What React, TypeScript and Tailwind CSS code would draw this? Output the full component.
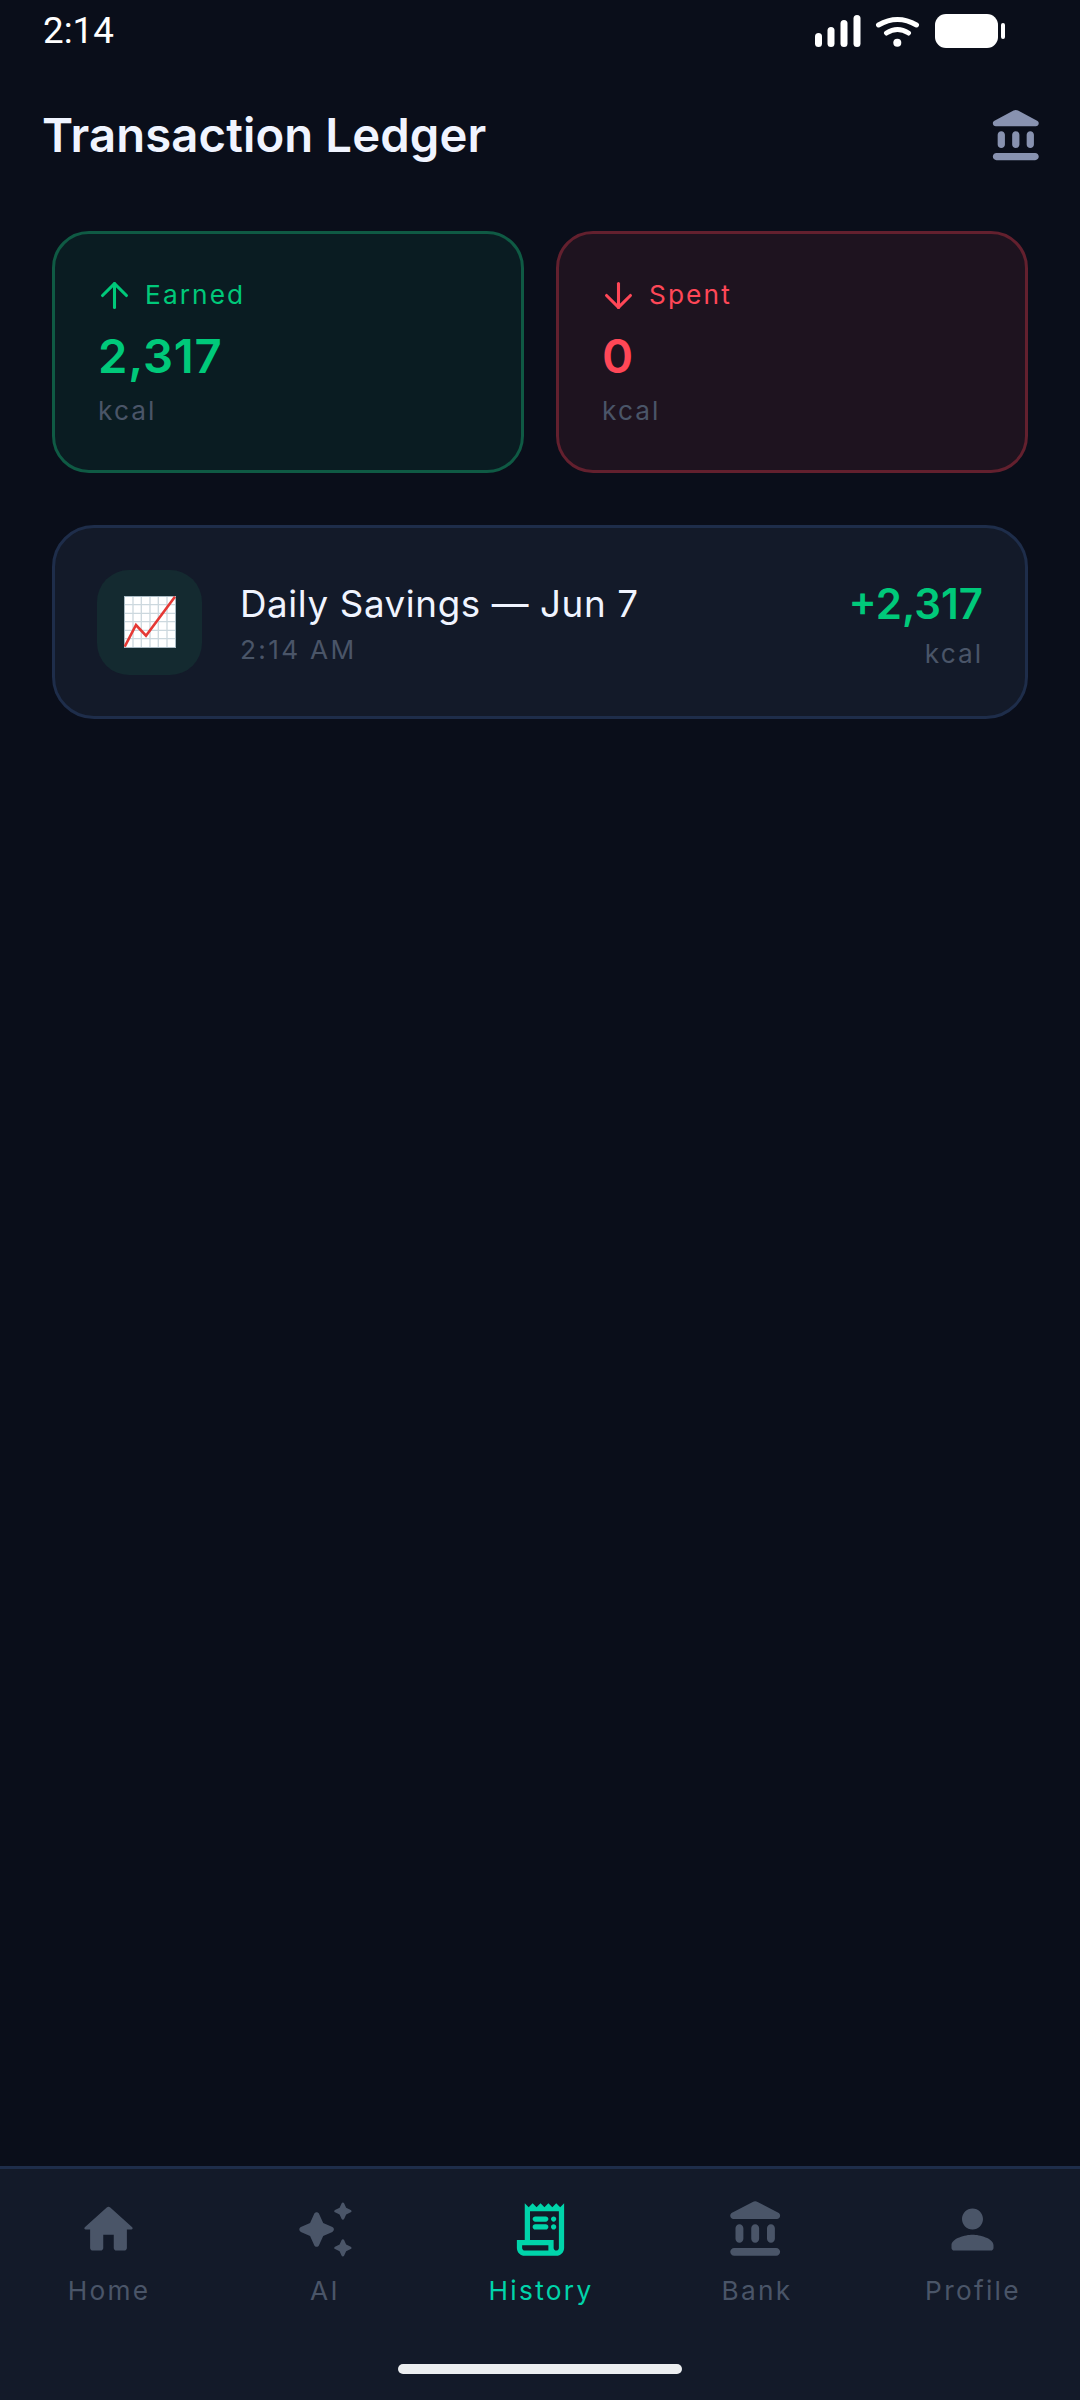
import { ArrowDown, ArrowUp } from "lucide-react"

const font = { fontFamily: "Inter, sans-serif" }

const paths = {
  home: "M10 19v-5h4v5c0 .55.45 1 1 1h3c.55 0 1-.45 1-1v-7h1.7c.46 0 .68-.57.33-.87L12.67 3.6c-.38-.34-.96-.34-1.34 0l-8.36 7.53c-.34.3-.13.87.33.87H5v7c0 .55.45 1 1 1h3c.55 0 1-.45 1-1z",
  ai: "M19.46 8l.79-1.75L22 5.46c.39-.18.39-.73 0-.91l-1.75-.79L19.46 2c-.18-.39-.73-.39-.91 0l-.79 1.75-1.76.79c-.39.18-.39.73 0 .91l1.75.79.79 1.76c.18.39.74.39.92 0zM11.5 9.5 9.91 6c-.35-.78-1.47-.78-1.82 0L6.5 9.5 3 11.09c-.78.36-.78 1.47 0 1.82l3.5 1.59L8.09 18c.36.78 1.47.78 1.82 0l1.59-3.5 3.5-1.59c.78-.36.78-1.47 0-1.82L11.5 9.5zm7.04 6.5-.79 1.75-1.75.79c-.39.18-.39.73 0 .91l1.75.79.79 1.76c.18.39.73.39.91 0l.79-1.75 1.76-.79c.39-.18.39-.73 0-.91l-1.75-.79-.79-1.76c-.18-.39-.74-.39-.92 0z",
  receipt:
    "M19.5 3.5 18 2l-1.5 1.5L15 2l-1.5 1.5L12 2l-1.5 1.5L9 2 7.5 3.5 6 2v14H3v3c0 1.66 1.34 3 3 3h12c1.66 0 3-1.34 3-3V2l-1.5 1.5zM15 20H6c-.55 0-1-.45-1-1v-1h10v2zm4-1c0 .55-.45 1-1 1s-1-.45-1-1v-3H8V5h11v14zM10 7h4c.55 0 1 .45 1 1s-.45 1-1 1h-4c-.55 0-1-.45-1-1s.45-1 1-1zm7 2c.55 0 1-.45 1-1s-.45-1-1-1-1 .45-1 1 .45 1 1 1zm-7 1h4c.55 0 1 .45 1 1s-.45 1-1 1h-4c-.55 0-1-.45-1-1s.45-1 1-1zm7 2c.55 0 1-.45 1-1s-.45-1-1-1-1 .45-1 1 .45 1 1 1z",
  bank: "M4 11.5v4c0 .83.67 1.5 1.5 1.5S7 16.33 7 15.5v-4c0-.83-.67-1.5-1.5-1.5S4 10.67 4 11.5zm6 0v4c0 .83.67 1.5 1.5 1.5s1.5-.67 1.5-1.5v-4c0-.83-.67-1.5-1.5-1.5s-1.5.67-1.5 1.5zM3.5 22h16c.83 0 1.5-.67 1.5-1.5s-.67-1.5-1.5-1.5h-16c-.83 0-1.5.67-1.5 1.5S2.67 22 3.5 22zM16 11.5v4c0 .83.67 1.5 1.5 1.5s1.5-.67 1.5-1.5v-4c0-.83-.67-1.5-1.5-1.5s-1.5.67-1.5 1.5zM10.57 1.49l-7.9 4.16c-.41.21-.67.64-.67 1.1C2 7.44 2.56 8 3.25 8h16.51C20.44 8 21 7.44 21 6.75c0-.46-.26-.89-.67-1.1l-7.9-4.16c-.58-.31-1.28-.31-1.86 0z",
  person:
    "M12 12c2.21 0 4-1.79 4-4s-1.79-4-4-4-4 1.79-4 4 1.79 4 4 4zm0 2c-2.67 0-8 1.34-8 4v1c0 .55.45 1 1 1h14c.55 0 1-.45 1-1v-1c0-2.66-5.33-4-8-4z",
}

function Icon({ d, className }: { d: string; className: string }) {
  return (
    <svg viewBox="0 0 24 24" fill="currentColor" className={className}>
      <path d={d} />
    </svg>
  )
}

function StatusBar() {
  return (
    <div className="flex h-[61px] items-start justify-between pl-[43px] pr-[75px] pt-[10px] text-white">
      <span className="mt-[1px] text-[36.75px] leading-[40px]" style={{ fontFamily: "Roboto, sans-serif" }}>
        2:14
      </span>
      <svg width="190" height="36" viewBox="0 0 190 36" fill="white" className="mt-[4px]">
        <rect x="0" y="19" width="7" height="14" rx="3.5" />
        <rect x="12.5" y="13" width="7" height="20" rx="3.5" />
        <rect x="25.5" y="6" width="7" height="27" rx="3.5" />
        <rect x="38.5" y="1" width="7" height="32" rx="3.5" />
        <path d="M63.5 11 Q82.5 0 101.5 11" fill="none" stroke="white" strokeWidth="5" strokeLinecap="round" />
        <path d="M71.5 19 Q82.5 12 93.5 19" fill="none" stroke="white" strokeWidth="5" strokeLinecap="round" />
        <circle cx="82.3" cy="28.7" r="4" />
        <rect x="120" y="0" width="63" height="34" rx="11" />
        <rect x="186" y="9" width="4" height="16" rx="2" />
      </svg>
    </div>
  )
}

function StatCard({
  label,
  value,
  up,
  box,
  tone,
}: {
  label: string
  value: string
  up?: boolean
  box: string
  tone: string
}) {
  const Arrow = up ? ArrowUp : ArrowDown
  return (
    <div className={`h-[242px] flex-1 rounded-[37px] border-[3px] pl-[43px] pt-[44px] ${box}`}>
      <div className={`flex h-[34px] items-center gap-[10px] text-[26.25px] tracking-[2.1px] ${tone}`}>
        <Arrow className="-ml-[4px] h-[41px] w-[41px]" strokeWidth={1.8} />
        <span>{label}</span>
      </div>
      <div className={`mt-[16px] text-[47.25px] leading-[56px] font-semibold tracking-[0.8px] ${tone}`}>{value}</div>
      <div className="mt-[11px] text-[26.25px] leading-[32px] tracking-[2.1px] text-[#4a5568]">kcal</div>
    </div>
  )
}

function NavItem({ label, d, active }: { label: string; d: string; active?: boolean }) {
  const tone = active ? "text-[#00d4aa]" : "text-[#4a5568]"
  return (
    <div className={`flex flex-1 flex-col items-center ${tone}`}>
      <Icon d={d} className="h-[63px] w-[63px]" />
      <span className="ml-[2px] mt-[14px] text-[26.25px] leading-[32px] tracking-[2.3px]">{label}</span>
    </div>
  )
}

export default function App() {
  return (
    <div className="flex h-[2400px] w-[1080px] flex-col bg-[#0a0e1a]" style={font}>
      <StatusBar />
      <div className="flex h-[170px] items-start justify-between pl-[42px] pr-[34px] pt-[46px]">
        <h1 className="text-[47.25px] leading-[56px] font-semibold tracking-[0.1px] text-[#f0f4ff]">Transaction Ledger</h1>
        <Icon d={paths.bank} className="h-[58px] w-[58px] text-[#8892b0]" />
      </div>

      <div className="flex gap-[32px] px-[52px]">
        <StatCard label="Earned" value="2,317" up box="border-[#0f5a44] bg-[#0a1c22]" tone="text-[#00c97a]" />
        <StatCard label="Spent" value="0" box="border-[#63202e] bg-[#1e131f]" tone="text-[#ff4757]" />
      </div>

      <div className="mx-[52px] mt-[52px] flex h-[194px] items-center rounded-[42px] border-[3px] border-[#1e2d4a] bg-[#131a29] pl-[42px] pr-[42px]">
        <div className="flex h-[105px] w-[105px] items-center justify-center rounded-[32px] bg-[#142a30]">
          <svg width="52" height="52" viewBox="0 0 52 52">
            <rect x="0.5" y="0.5" width="51" height="51" fill="#ffffff" stroke="#a9bac3" />
            <path
              d="M9 1v50M17.3 1v50M26 1v50M34.3 1v50M43 1v50M1 8.7h50M1 17.3h50M1 25.7h50M1 34.3h50M1 42.7h50"
              stroke="#ccd8de"
              strokeWidth="1.3"
            />
            <path d="M0.7 50.7 L12 29 L22 39.7 L51 0.7" fill="none" stroke="#e53935" strokeWidth="2.6" />
          </svg>
        </div>
        <div className="ml-[38px] mt-[3px] flex-1">
          <div className="text-[36.75px] leading-[44px] tracking-[0.6px] text-[#f0f4ff]">Daily Savings — Jun 7</div>
          <div className="mt-[8px] text-[26.25px] leading-[32px] tracking-[2.3px] text-[#4a5568]">2:14 AM</div>
        </div>
        <div className="mt-[6px] text-right">
          <div className="text-[42px] leading-[48px] font-semibold text-[#00c97a]">+2,317</div>
          <div className="mt-[10px] text-[26.25px] leading-[32px] tracking-[2px] text-[#4a5568]">kcal</div>
        </div>
      </div>

      <div className="mt-auto h-[234px] border-t-[3px] border-[#1e2d4a] bg-[#131a29]">
        <div className="flex pt-[29px]">
          <NavItem label="Home" d={paths.home} />
          <NavItem label="AI" d={paths.ai} />
          <NavItem label="History" d={paths.receipt} active />
          <NavItem label="Bank" d={paths.bank} />
          <NavItem label="Profile" d={paths.person} />
        </div>
        <div className="mx-auto mt-[57px] h-[10px] w-[284px] rounded-full bg-[#eceef0]" />
      </div>
    </div>
  )
}
